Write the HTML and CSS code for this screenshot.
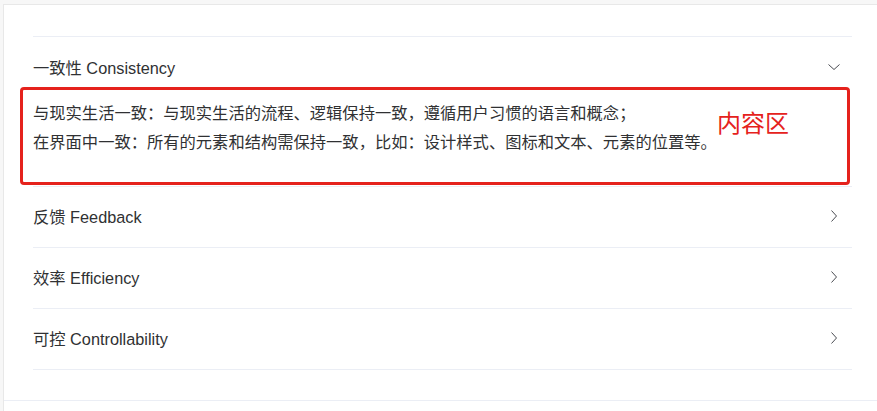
FILE: index.html
```html
<!DOCTYPE html>
<html lang="zh-CN">
<head>
    <meta charset="UTF-8">
    <title>Collapse</title>
    <link rel="stylesheet" href="styles.css">
</head>
<body>
    <div class="demo-block">
        <div class="source">
            <div class="collapse">
                <div class="collapse-item is-active">
                    <div class="collapse-header">
                        <span>一致性 Consistency</span>
                        <svg class="arrow" width="14" height="14" viewBox="0 0 14 14"><path d="M1.5 4.5 L7 9.5 L12.5 4.5" fill="none" stroke="#4a4c52" stroke-width="1"/></svg>
                    </div>
                    <div class="collapse-content">
                        <div>与现实生活一致：与现实生活的流程、逻辑保持一致，遵循用户习惯的语言和概念；</div>
                        <div>在界面中一致：所有的元素和结构需保持一致，比如：设计样式、图标和文本、元素的位置等。</div>
                        <div class="mark-box">
                            <span class="mark-label">内容区</span>
                        </div>
                    </div>
                </div>
                <div class="collapse-item">
                    <div class="collapse-header">
                        <span>反馈 Feedback</span>
                        <svg class="arrow" width="14" height="14" viewBox="0 0 14 14"><path d="M4.5 1.5 L9.5 7 L4.5 12.5" fill="none" stroke="#4a4c52" stroke-width="1"/></svg>
                    </div>
                </div>
                <div class="collapse-item">
                    <div class="collapse-header">
                        <span>效率 Efficiency</span>
                        <svg class="arrow" width="14" height="14" viewBox="0 0 14 14"><path d="M4.5 1.5 L9.5 7 L4.5 12.5" fill="none" stroke="#4a4c52" stroke-width="1"/></svg>
                    </div>
                </div>
                <div class="collapse-item">
                    <div class="collapse-header">
                        <span>可控 Controllability</span>
                        <svg class="arrow" width="14" height="14" viewBox="0 0 14 14"><path d="M4.5 1.5 L9.5 7 L4.5 12.5" fill="none" stroke="#4a4c52" stroke-width="1"/></svg>
                    </div>
                </div>
            </div>
        </div>
        <div class="meta"></div>
    </div>
</body>
</html>
```

FILE: styles.css
```css
* {
    margin: 0;
    padding: 0;
    box-sizing: border-box;
}

body {
    font-family: "Liberation Sans", "Noto Sans CJK SC", sans-serif;
    background: #f7f7f7;
    color: #303133;
    padding: 4px 0 0 3px;
    height: 411px;
    overflow: hidden;
}

.demo-block {
    background: #fff;
    border-top: 1px solid #e8e8e8;
    border-left: 1px solid #e8e8e8;
    height: 100%;
}

.source {
    padding: 31px 25px 30px 29px;
    border-bottom: 1px solid #ebeef5;
}

.collapse {
    border-top: 1px solid #ebeef5;
}

.collapse-item {
    border-bottom: 1px solid #ebeef5;
}

.collapse-header {
    height: 60px;
    display: flex;
    align-items: center;
    justify-content: space-between;
    font-size: 16.3px;
    padding-right: 11px;
    padding-bottom: 2px;
}

.collapse-item:first-child .collapse-header {
    height: 61px;
}

.arrow {
    display: block;
}

.collapse-content {
    position: relative;
    font-size: 16.3px;
    line-height: 29px;
    padding-top: 1px;
    padding-bottom: 29px;
}

.mark-box {
    position: absolute;
    left: -13px;
    top: -11px;
    width: 830px;
    height: 98px;
    border: 3px solid #e5221c;
    border-radius: 4px;
}

.mark-label {
    position: absolute;
    left: 694px;
    top: 19px;
    color: #e5221c;
    font-size: 24px;
    line-height: 30px;
}
```
